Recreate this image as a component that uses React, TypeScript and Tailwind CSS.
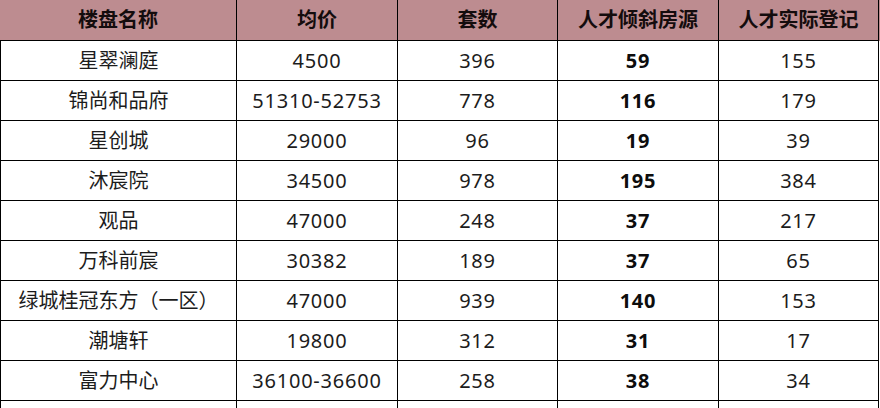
const rows = [
  ["星翠澜庭", "4500", "396", "59", "155"],
  ["锦尚和品府", "51310-52753", "778", "116", "179"],
  ["星创城", "29000", "96", "19", "39"],
  ["沐宸院", "34500", "978", "195", "384"],
  ["观品", "47000", "248", "37", "217"],
  ["万科前宸", "30382", "189", "37", "65"],
  ["绿城桂冠东方（一区）", "47000", "939", "140", "153"],
  ["潮塘轩", "19800", "312", "31", "17"],
  ["富力中心", "36100-36600", "258", "38", "34"],
  ["", "", "", "", ""],
];

const headers = ["楼盘名称", "均价", "套数", "人才倾斜房源", "人才实际登记"];

const cols = "grid grid-cols-[237px_161px_160px_161px_160px]";

export default function App() {
  return (
    <div
      className="w-[880px] h-[408px] overflow-hidden bg-white text-[20px] text-[#1c1c1c]"
      style={{ fontFamily: '"Noto Sans", "Noto Sans CJK SC", sans-serif' }}
    >
      {/* Header */}
      <div className={`${cols} h-[41px] bg-[#bd8c90]`}>
        {headers.map((h, i) => (
          <div
            key={i}
            className="flex items-center justify-center border-r border-b border-black font-bold text-[#140c0d]"
          >
            {h}
          </div>
        ))}
      </div>

      {/* Body */}
      {rows.map((r, ri) => (
        <div key={ri} className={`${cols} h-[40px]`}>
          {r.map((c, ci) => (
            <div
              key={ci}
              className={`flex items-center justify-center border-r border-b border-black ${
                ci === 0 ? "border-l" : "tracking-[0.8px]"
              } ${ci === 3 ? "font-bold text-[#0d0d0d]" : ""}`}
            >
              {c}
            </div>
          ))}
        </div>
      ))}
    </div>
  );
}
